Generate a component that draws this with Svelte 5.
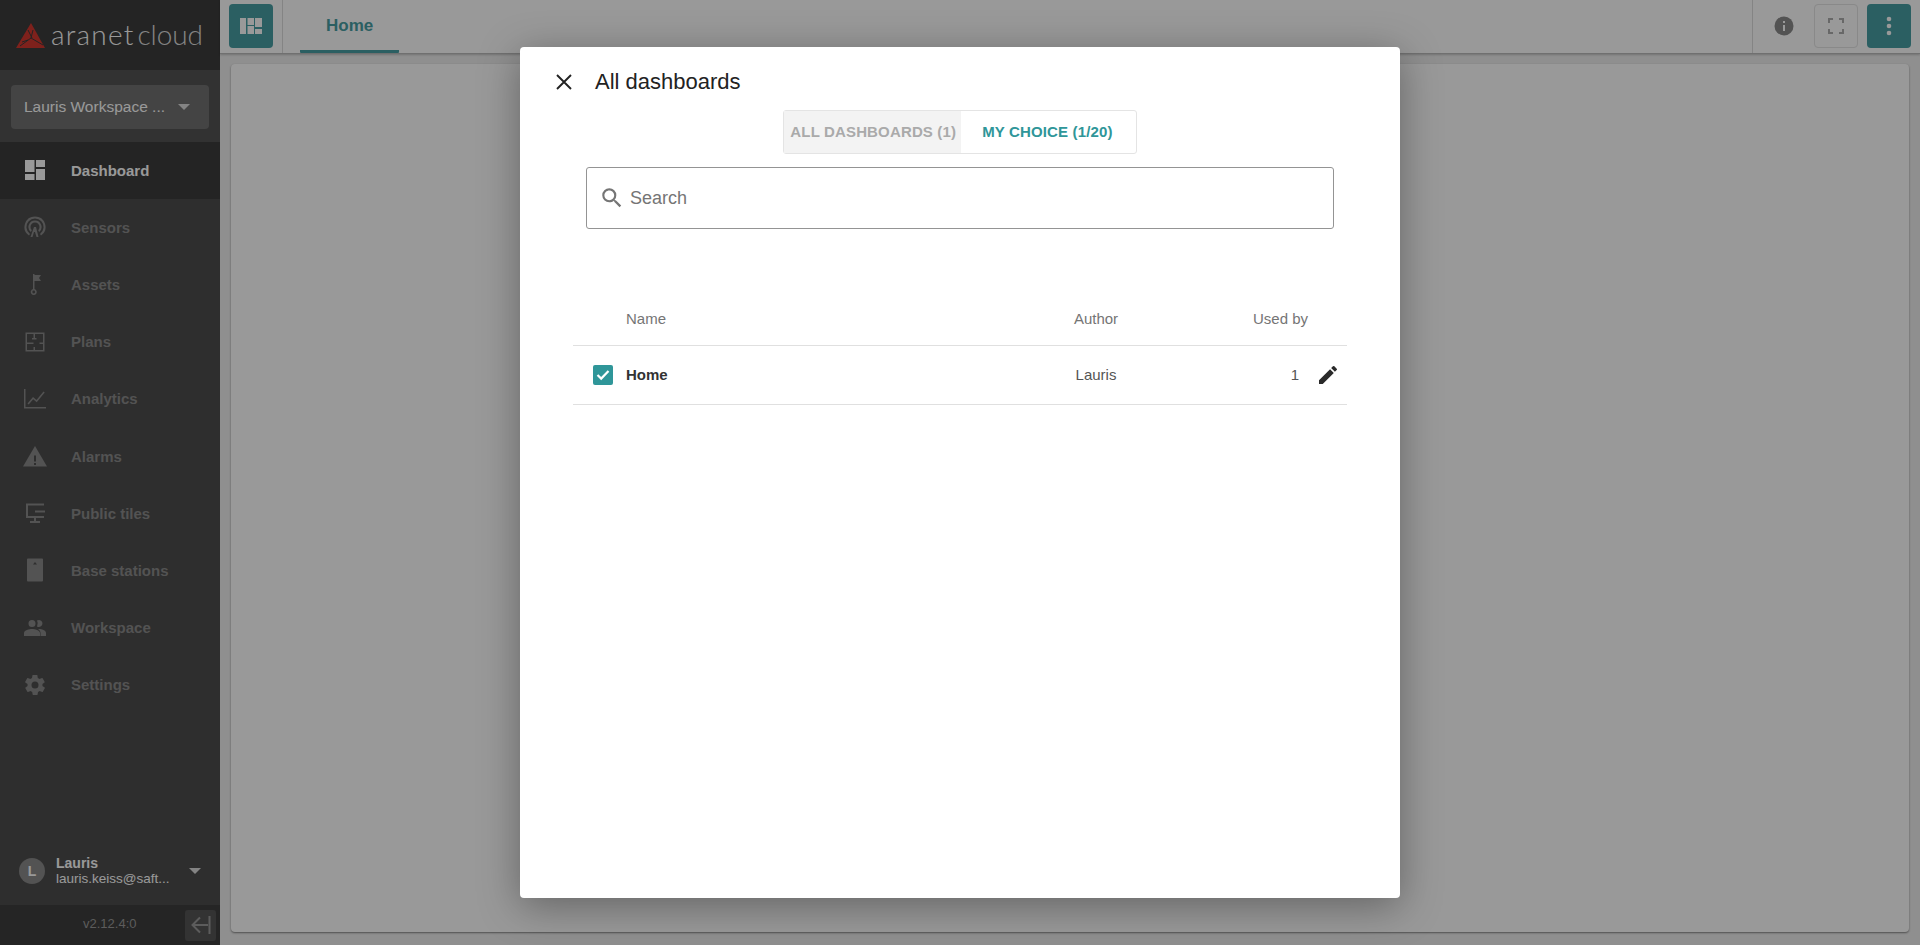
<script>
  const nav = [
    { name: 'Dashboard', d: 'M2 2h9.500v12H2zM13 2h9v7h-9zM13 11h9v11h-9zM2 16h9.500v6H2z', active: true },
    { name: 'Sensors', d: 'M12 1.500a10.500 10.500 0 0 0-6 19.100l1-1.700a8.500 8.500 0 1 1 10 0l1 1.700a10.500 10.500 0 0 0-6-19.100zm0 4a6.500 6.500 0 0 0-4.200 11.500l1-1.800a4.500 4.500 0 1 1 6.400 0l1 1.800A6.500 6.500 0 0 0 12 5.500zM11 12l-3.500 10h2l1.500-5h1l1.500 5h2L13 12z' },
    { name: 'Assets', d: 'M10 2h1.500v1L18 3l-2 3 2 3h-6.500v8.100a3 3 0 1 1-1.500 0zM10.700 18.600a1.400 1.400 0 1 0 .1 2.800 1.400 1.400 0 0 0-.1-2.800z' },
    { name: 'Plans', d: 'M2.500 2.500h19v19h-19zm1.500 1.500v16h6.500v-3H12v3h8v-6h-3.500v-1.500H20V4h-8v4h1.500v1.500H9V8h1.500V4zm0 8.500V14h6.500v-1.500z' },
    { name: 'Analytics', d: 'M1 2h1.500v18H23v1.500H1zM4.500 16.500l5.500-6.500 3.500 3 7-8.500 1.200 1-8 9.700-3.500-3-4.500 5.300z' },
    { name: 'Alarms', d: 'M0 22.500 12 2l12 20.500zm11-3.500v2h2v-2zm0-7.500v6h2v-6z' },
    { name: 'Public tiles', d: 'M3 2.500h18v2H5V15h16v2h-8v3h4v2H7v-2h4v-3H3zM12 9.500h10v2H12z' },
    { name: 'Base stations', d: 'M5 0.500h14a1 1 0 0 1 1 1v21a1 1 0 0 1-1 1H5a1 1 0 0 1-1-1v-21a1 1 0 0 1 1-1zM12 4l-2 2.500h4z' },
    { name: 'Workspace', d: 'M16 11a3.500 3.500 0 1 0-2-6.400 6 6 0 0 1 0 5.800c.6.400 1.300.6 2 .6zM9 11a3.500 3.500 0 1 0 0-7 3.500 3.500 0 0 0 0 7zm0 2c-2.700 0-8 1.300-8 4v3h16v-3c0-2.700-5.300-4-8-4zm7 0h-1c1.400 1 2.500 2.300 2.500 4v3H23v-3c0-2.700-4.300-4-7-4z' },
    { name: 'Settings', d: 'M19.400 13c.1-.3.1-.7.100-1s0-.7-.1-1l2.100-1.600c.2-.2.2-.4.100-.6l-2-3.500c-.1-.2-.4-.3-.6-.2l-2.500 1c-.5-.4-1.100-.7-1.700-1l-.4-2.700c0-.2-.2-.4-.5-.4h-4c-.2 0-.4.200-.5.400l-.4 2.700c-.6.300-1.200.6-1.700 1l-2.500-1c-.2-.1-.5 0-.6.200l-2 3.500c-.1.200-.1.400.1.600L4.600 11c-.1.300-.1.700-.1 1s0 .7.1 1l-2.100 1.600c-.2.200-.2.400-.1.600l2 3.500c.1.200.4.300.6.200l2.500-1c.5.400 1.100.7 1.700 1l.4 2.700c.1.200.3.400.5.400h4c.3 0 .5-.2.500-.4l.4-2.700c.6-.3 1.200-.6 1.700-1l2.500 1c.2.100.5 0 .6-.2l2-3.500c.1-.2.100-.4-.1-.6zM12 15.500a3.500 3.500 0 1 1 0-7 3.500 3.500 0 0 1 0 7z' }
  ]
</script>

<div class='page'>
  <aside class='sidebar'>
    <div class='logo'>
      <svg width='30' height='26' viewBox='0 0 30 26'>
        <path d='M15 0 29 25H0z' fill='#d2382f' />
        <path d='M12 7l4 8M17 7l-2 8M15 15l12 7M15 15 4 23M6 19l6-2' stroke='#3c3c3c' stroke-width='1' fill='none' />
      </svg>
      <span class='aranet'>aranet</span><span class='cloud'>cloud</span>
    </div>

    <div class='workspace'>
      <div class='select'>
        <span>Lauris Workspace ...</span>
        <i class='caret'></i>
      </div>
    </div>

    <ul class='menu'>
      {#each nav as item}
        <li class:active={item.active}>
          <svg width='24' height='24' viewBox='0 0 24 24'><path d={item.d} fill-rule='evenodd' /></svg>
          <span>{item.name}</span>
        </li>
      {/each}
    </ul>

    <div class='user'>
      <div class='avatar'>L</div>
      <div class='who'>
        <b>Lauris</b>
        <small>lauris.keiss@saft...</small>
      </div>
      <i class='caret'></i>
    </div>

    <div class='version'>
      <span>v2.12.4:0</span>
      <button class='collapse' aria-label='Collapse'>
        <svg width='22' height='22' viewBox='0 0 22 22'><path d='M19.500 2v18M18 11H3M10 3.500 2.500 11l7.500 7.500' stroke='#9a9a9a' stroke-width='2' fill='none' /></svg>
      </button>
    </div>
  </aside>

  <main class='main'>
    <header class='topbar'>
      <div class='left'>
        <button class='teal' aria-label='Dashboards'>
          <svg width='22' height='16' viewBox='0 0 22 16'><path d='M0 0h6v16H0zM7.500 0H14v7H7.500zM15 0h7v9h-7zM7.500 8H14v8H7.500zM15 11h7v5h-7z' fill='#fff' /></svg>
        </button>
      </div>
      <div class='tab'>Home</div>
      <div class='actions'>
        <svg class='info' width='20' height='20' viewBox='0 0 20 20'>
          <circle cx='10' cy='10' r='9.500' fill='#8a8a8a' />
          <path d='M9 9h2v6H9zM9 5h2v2H9z' fill='#fff' />
        </svg>
        <button class='outline' aria-label='Fullscreen'>
          <svg width='16' height='16' viewBox='0 0 16 16'><path d='M1 5V1h4M11 1h4v4M15 11v4h-4M5 15H1v-4' stroke='#adadad' stroke-width='2' fill='none' /></svg>
        </button>
        <button class='teal' aria-label='Menu'>
          <svg width='6' height='20' viewBox='0 0 6 20'><circle cx='3' cy='3' r='2.300' fill='#fff' /><circle cx='3' cy='10' r='2.300' fill='#fff' /><circle cx='3' cy='17' r='2.300' fill='#fff' /></svg>
        </button>
      </div>
    </header>
    <div class='content'><div class='panel'></div></div>
  </main>

  <div class='scrim'></div>

  <section class='modal'>
    <div class='title'>
      <svg width='18' height='18' viewBox='0 0 18 18'><path d='M2 2l14 14M16 2 2 16' stroke='#222' stroke-width='1.900' fill='none' /></svg>
      <h2>All dashboards</h2>
    </div>

    <div class='tabs'>
      <div class='seg off'>ALL DASHBOARDS (1)</div>
      <div class='seg on'>MY CHOICE (1/20)</div>
    </div>

    <div class='search'>
      <svg width='26' height='26' viewBox='0 0 24 24'><path d='M15.500 14h-.79l-.28-.27A6.470 6.470 0 0 0 16 9.500 6.500 6.500 0 1 0 9.500 16c1.610 0 3.090-.59 4.230-1.570l.27.28v.79l5 4.990L20.490 19l-4.990-5zm-6 0C7.010 14 5 11.990 5 9.500S7.010 5 9.500 5 14 7.010 14 9.500 11.990 14 9.500 14z' fill='#757575' /></svg>
      <span>Search</span>
    </div>

    <div class='table'>
      <div class='row head'>
        <span class='c-check'></span>
        <span class='c-name'>Name</span>
        <span class='c-author'>Author</span>
        <span class='c-used'>Used by</span>
        <span class='c-edit'></span>
      </div>
      <div class='row item'>
        <span class='c-check'>
          <span class='check'>
            <svg width='14' height='12' viewBox='0 0 14 12'><path d='M1.500 6 5.200 9.600 12.500 2' stroke='#fff' stroke-width='2.200' fill='none' /></svg>
          </span>
        </span>
        <span class='c-name strong'>Home</span>
        <span class='c-author'>Lauris</span>
        <span class='c-used one'>1</span>
        <span class='c-edit'>
          <svg width='24' height='24' viewBox='0 0 24 24'><path d='M3 17.250V21h3.750L17.810 9.940l-3.750-3.750zM20.710 7.040a1 1 0 0 0 0-1.410l-2.340-2.340a1 1 0 0 0-1.410 0l-1.830 1.830 3.750 3.750z' fill='#2a2a2a' /></svg>
        </span>
      </div>
    </div>
  </section>
</div>

<style>
  :global(body) {
    margin: 0;
    font-family: "Liberation Sans", Arial, sans-serif;
  }
  button {
    padding: 0;
    border: 0;
    background: none;
  }

  .page {
    position: relative;
    display: flex;
    height: 945px;
    overflow: hidden;
    background: #eee;
  }

  .sidebar {
    display: flex;
    flex-direction: column;
    flex: none;
    width: 220px;
    background: #4e4e4e;
  }
  .logo {
    display: flex;
    align-items: center;
    height: 70px;
    padding-left: 16px;
    box-sizing: border-box;
    background: #3c3c3c;
    font-family: Lato, sans-serif;
    font-weight: 300;
    font-size: 28px;
    color: #fff;
  }
  .logo svg { margin-top: 1px; }
  .aranet {
    margin: -3px 0 0 5px;
    letter-spacing: 1.2px;
  }
  .cloud {
    margin: -3px 0 0 3px;
    color: #ddd;
    letter-spacing: -.1px;
  }

  .workspace {
    height: 72px;
    padding: 15px 11px 0;
    box-sizing: border-box;
    background: #545454;
  }
  .select {
    display: flex;
    align-items: center;
    justify-content: space-between;
    height: 44px;
    padding: 0 19px 1px 13px;
    box-sizing: border-box;
    border-radius: 4px;
    background: #727272;
    color: #fff;
    font-size: 15.5px;
    font-weight: 500;
  }
  .caret {
    width: 0;
    height: 0;
    border: 6px solid transparent;
    border-top-color: #ddd;
    border-bottom: 0;
  }

  .menu {
    flex: 1;
    margin: 0;
    padding: 0;
    list-style: none;
  }
  .menu li {
    display: flex;
    align-items: center;
    gap: 24px;
    height: 57.2px;
    padding-left: 23px;
    padding-bottom: 1px;
    box-sizing: border-box;
    color: #8a8a8a;
    font-size: 15px;
    font-weight: 700;
  }
  .menu svg { fill: #8a8a8a; }
  .menu .active {
    background: #3c3c3c;
    color: #fff;
  }
  .menu .active svg { fill: #fff; }

  .user {
    display: flex;
    align-items: center;
    height: 73px;
    padding: 4px 19px 0;
    box-sizing: border-box;
    color: #fff;
  }
  .avatar {
    display: grid;
    place-items: center;
    flex: none;
    width: 26px;
    height: 26px;
    border-radius: 50%;
    background: #8a8a8a;
    font-size: 14px;
    font-weight: 700;
  }
  .who {
    display: flex;
    flex-direction: column;
    flex: 1;
    margin-left: 11px;
  }
  .who b {
    font-size: 14px;
    line-height: 16px;
    font-weight: 700;
  }
  .who small {
    font-size: 13.5px;
    line-height: 15px;
  }

  .version {
    display: flex;
    align-items: center;
    height: 40px;
    padding: 0 4px 0 83px;
    background: #3f3f3f;
    color: #9a9a9a;
    font-size: 13px;
  }
  .version span { margin-top: -4px; }
  .collapse {
    display: grid;
    place-items: center;
    width: 31px;
    height: 31px;
    margin-left: auto;
    border-radius: 3px;
    background: #565656;
  }

  .main {
    display: flex;
    flex-direction: column;
    flex: 1;
    min-width: 0;
  }
  .topbar {
    display: flex;
    align-items: stretch;
    flex: none;
    height: 54px;
    border-bottom: 1px solid #bbb;
    box-shadow: 0 1px 2px rgba(0, 0, 0, .2);
    box-sizing: border-box;
    background: #fff;
  }
  .left {
    display: flex;
    align-items: flex-start;
    padding: 4px 9px 0;
    border-right: 1px solid #ddd;
  }
  .teal {
    display: grid;
    place-items: center;
    width: 44px;
    height: 44px;
    border-radius: 4px;
    background: #489ea3;
  }
  .tab {
    margin-left: 17px;
    padding: 2px 26px 0;
    border-bottom: 3px solid #489ea3;
    border-radius: 0 0 1px 1px;
    color: #489ea3;
    font-size: 17px;
    font-weight: 700;
    line-height: 48px;
  }
  .actions {
    display: flex;
    align-items: flex-start;
    gap: 9px;
    margin-left: auto;
    padding: 4px 9px 0 21px;
    border-left: 1px solid #ddd;
  }
  .info {
    margin: 12px 11px 0 0;
  }
  .outline {
    display: grid;
    place-items: center;
    box-sizing: border-box;
    width: 44px;
    height: 44px;
    border: 1px solid #e4e4e4;
    border-radius: 4px;
  }
  .content {
    flex: 1;
    padding: 10px 11px 13px;
    min-height: 0;
  }
  .panel {
    height: 100%;
    border-radius: 4px;
    background: #fff;
    box-shadow: 0 1px 2px rgba(0, 0, 0, .45);
  }

  .scrim {
    position: absolute;
    inset: 0;
    background: rgba(0, 0, 0, .4);
  }
  .modal {
    position: absolute;
    top: 47px;
    left: 520px;
    box-sizing: border-box;
    width: 880px;
    height: 851px;
    padding: 0 53px;
    border-radius: 4px;
    background: #fff;
    box-shadow: 0 8px 40px rgba(0, 0, 0, .35);
    color: #222;
  }
  .title {
    display: flex;
    align-items: center;
    gap: 22px;
    height: 63px;
    margin-left: -18px;
    padding-top: 7px;
    box-sizing: border-box;
  }
  .title h2 {
    margin: 0;
    font-size: 22px;
    font-weight: 400;
  }
  .tabs {
    display: flex;
    width: max-content;
    margin: 0 auto;
    border: 1px solid #e4e4e4;
    border-radius: 3px;
    height: 44px;
    box-sizing: border-box;
    font-size: 15px;
    font-weight: 700;
    letter-spacing: .15px;
    line-height: 41px;
  }
  .seg {
    padding: 0 23px 0 21px;
    white-space: nowrap;
  }
  .off {
    padding: 0 5px 0 6px;
    background: #f3f3f3;
    color: #aaa;
  }
  .on { color: #2f9699; }
  .search {
    display: flex;
    align-items: center;
    gap: 5px;
    box-sizing: border-box;
    width: 748px;
    height: 62px;
    margin: 13px 0 0 13px;
    padding-left: 12px;
    border: 1px solid #949494;
    border-radius: 3px;
    color: #757575;
    font-size: 18px;
  }
  .table {
    width: 774px;
    margin-top: 58px;
  }
  .row {
    display: flex;
    align-items: center;
    border-bottom: 1px solid #e0e0e0;
    font-size: 15px;
    color: #555;
  }
  .head {
    height: 59px;
    padding-top: 5px;
    box-sizing: border-box;
    color: #757575;
  }
  .item {
    height: 59px;
    padding-bottom: 1px;
    box-sizing: border-box;
  }
  .c-check {
    display: flex;
    justify-content: center;
    width: 53px;
    padding-left: 7px;
    box-sizing: border-box;
  }
  .c-name { width: 406px; }
  .c-author {
    width: 130px;
    text-align: center;
    margin-left: -1px;
  }
  .c-used {
    width: 147px;
    text-align: right;
    box-sizing: border-box;
  }
  .one { padding-right: 9px; }
  .c-edit {
    display: flex;
    flex: none;
    width: 30px;
    margin-left: 8px;
  }
  .strong {
    color: #333;
    font-weight: 700;
  }
  .check {
    display: grid;
    place-items: center;
    width: 20px;
    height: 20px;
    border-radius: 2px;
    background: #2f9699;
  }
</style>
